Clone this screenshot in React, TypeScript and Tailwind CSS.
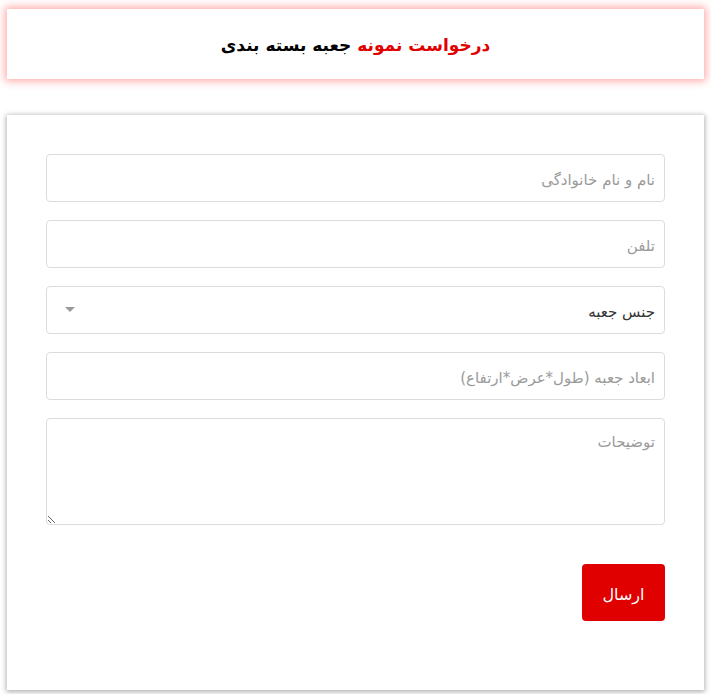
import { useState } from "react";

const fieldClass =
  "w-full h-12 rounded border border-[#dcdcdc] bg-white pl-3 pr-[9px] pt-1 text-[15px] text-[#333] placeholder:text-[#9a9a9a] outline-none";

export default function App() {
  const [type, setType] = useState("");

  return (
    <div
      dir="rtl"
      className="min-h-[694px] bg-white px-[7px] pt-[9px] pb-1"
      style={{ fontFamily: '"DejaVu Sans", "Noto Sans", sans-serif' }}
    >
      {/* Title card */}
      <div className="flex h-[70px] items-center justify-center bg-white pt-1 shadow-[0_0_8px_2px_rgba(255,60,60,0.45)]">
        <h1 className="text-[17px] font-bold text-black">
          <span className="text-[#e00000]">درخواست نمونه</span> جعبه بسته بندی
        </h1>
      </div>

      {/* Form card */}
      <div className="mt-9 bg-white px-[39px] pt-[39px] pb-[69px] shadow-[0_1px_5px_1px_rgba(0,0,0,0.3)]">
        <form className="flex flex-col gap-[18px]" onSubmit={(e) => e.preventDefault()}>
          <input className={fieldClass} placeholder="نام و نام خانوادگی" />
          <input className={fieldClass} placeholder="تلفن" />
          <div className="relative">
            <select
              value={type}
              onChange={(e) => setType(e.target.value)}
              className={`${fieldClass} appearance-none`}
            >
              <option value="">جنس جعبه</option>
              <option value="1">مقوایی</option>
              <option value="2">کارتنی</option>
            </select>
            <span className="pointer-events-none absolute left-[19px] top-[21px] h-0 w-0 border-x-[5px] border-t-[5px] border-x-transparent border-t-[#9a9a9a]" />
          </div>
          <input className={fieldClass} placeholder="ابعاد جعبه (طول*عرض*ارتفاع)" />
          <textarea
            className="h-[107px] w-full rounded border border-[#dcdcdc] bg-white pl-3 pr-[9px] py-3 text-[15px] text-[#333] placeholder:text-[#9a9a9a] outline-none"
            placeholder="توضیحات"
          />
          <div className="mt-5">
            <button
              type="submit"
              className="mt-px h-[57px] w-[83px] rounded bg-[#e00000] pt-1 text-[16px] text-white"
            >
              ارسال
            </button>
          </div>
        </form>
      </div>
    </div>
  );
}
